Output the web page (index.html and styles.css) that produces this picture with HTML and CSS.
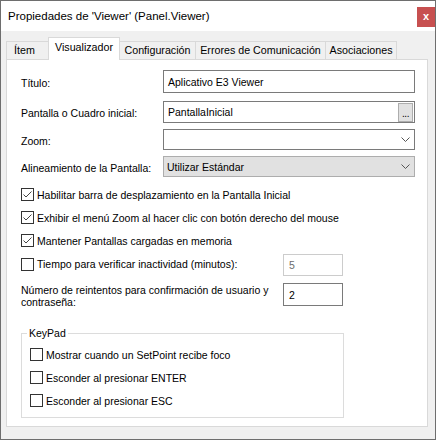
FILE: index.html
```html
<!DOCTYPE html>
<html lang="es">
<head>
<meta charset="utf-8">
<title>Propiedades de 'Viewer'</title>
<link rel="stylesheet" href="styles.css">
</head>
<body>
<div class="window">
  <div class="titlebar">
    <span class="title">Propiedades de 'Viewer' (Panel.Viewer)</span>
    <span class="close">x</span>
  </div>
  <div class="body">
    <div class="tabs">
      <div class="tab tab-item">Ítem</div>
      <div class="tab tab-viz active">Visualizador</div>
      <div class="tab tab-config">Configuración</div>
      <div class="tab tab-errors">Errores de Comunicación</div>
      <div class="tab tab-assoc">Asociaciones</div>
    </div>
    <div class="panel">
      <div class="field field-title">
        <span class="label">Título:</span>
        <div class="input">Aplicativo E3 Viewer</div>
      </div>
      <div class="field field-screen">
        <span class="label">Pantalla o Cuadro inicial:</span>
        <div class="input input-browse">PantallaInicial<span class="browse">...</span></div>
      </div>
      <div class="field field-zoom">
        <span class="label">Zoom:</span>
        <div class="combo"><span class="combo-text"></span><svg class="chevron" width="9" height="5" viewBox="0 0 9 5"><polyline points="0.5,0.5 4.5,4.5 8.5,0.5" fill="none" stroke="#555" stroke-width="1"/></svg></div>
      </div>
      <div class="field field-align">
        <span class="label">Alineamiento de la Pantalla:</span>
        <div class="combo combo-button"><span class="combo-text">Utilizar Estándar</span><svg class="chevron" width="9" height="5" viewBox="0 0 9 5"><polyline points="0.5,0.5 4.5,4.5 8.5,0.5" fill="none" stroke="#555" stroke-width="1"/></svg></div>
      </div>

      <div class="checks">
        <div class="check">
          <span class="box"><svg width="11" height="11" viewBox="0 0 11 11"><polyline points="1.5,5.5 4,8 9.5,2.5" fill="none" stroke="#444" stroke-width="1"/></svg></span>
          <span>Habilitar barra de desplazamiento en la Pantalla Inicial</span>
        </div>
        <div class="check">
          <span class="box"><svg width="11" height="11" viewBox="0 0 11 11"><polyline points="1.5,5.5 4,8 9.5,2.5" fill="none" stroke="#444" stroke-width="1"/></svg></span>
          <span>Exhibir el menú Zoom al hacer clic con botón derecho del mouse</span>
        </div>
        <div class="check">
          <span class="box"><svg width="11" height="11" viewBox="0 0 11 11"><polyline points="1.5,5.5 4,8 9.5,2.5" fill="none" stroke="#444" stroke-width="1"/></svg></span>
          <span>Mantener Pantallas cargadas en memoria</span>
        </div>
        <div class="check check-timer">
          <span class="timer-label"><span class="box"></span><span>Tiempo para verificar inactividad (minutos):</span></span>
          <div class="small-input disabled">5</div>
        </div>
      </div>

      <div class="retry">
        <span class="retry-label">Número de reintentos para confirmación de usuario y<br>contraseña:</span>
        <div class="small-input">2</div>
      </div>

      <fieldset class="group">
        <legend>KeyPad</legend>
        <div class="check">
          <span class="box"></span>
          <span>Mostrar cuando un SetPoint recibe foco</span>
        </div>
        <div class="check">
          <span class="box"></span>
          <span>Esconder al presionar ENTER</span>
        </div>
        <div class="check">
          <span class="box"></span>
          <span>Esconder al presionar ESC</span>
        </div>
      </fieldset>
    </div>
  </div>
</div>
</body>
</html>
```
FILE: styles.css
```css
* {
  box-sizing: border-box;
}

body {
  margin: 0;
  font-family: "Liberation Sans", Arial, sans-serif;
  font-size: 10.5px;
  color: #000;
  background: #fff;
}

.window {
  width: 436px;
  height: 440px;
  border: 1px solid #6e6e6e;
  background: #f0f0f0;
  display: flex;
  flex-direction: column;
}

.titlebar {
  height: 30px;
  flex: none;
  background: #fff;
  display: flex;
  align-items: flex-start;
}

.title {
  font-size: 11.5px;
  line-height: 31px;
  padding-left: 7px;
  color: #000;
}

.close {
  margin-left: auto;
  margin-top: 6px;
  width: 18px;
  height: 20px;
  background: #c75050;
  color: #fff;
  font-weight: bold;
  font-size: 11px;
  line-height: 19px;
  text-align: center;
}

.body {
  flex: 1;
  display: flex;
  flex-direction: column;
  padding: 6px 7px 12px 5px;
}

.tabs {
  display: flex;
  align-items: flex-end;
  height: 22px;
  flex: none;
}

.tab {
  height: 18px;
  border: 1px solid #d9d9d9;
  border-bottom: none;
  margin-left: -1px;
  background: #f0f0f0;
  text-align: center;
  line-height: 16px;
  white-space: nowrap;
  font-size: 10.7px;
}

.tab:first-child {
  margin-left: 0;
}

.tab.active {
  height: 23px;
  background: #fff;
  margin-bottom: -1px;
  position: relative;
  z-index: 1;
  line-height: 18px;
}

.tab-item { width: 43px; text-align: left; padding-left: 7px; }
.tab-viz { width: 72px; }
.tab-config { width: 77px; }
.tab-errors { width: 131px; }
.tab-assoc { width: 72px; }

.panel {
  flex: 1;
  background: #fff;
  border: 1px solid #d9d9d9;
  padding: 10px 12px 0 14px;
}

.field {
  display: grid;
  grid-template-columns: 142px 252px;
  align-items: center;
}

.label {
  padding-top: 2px;
}

.field-screen { margin-top: 8px; }
.field-zoom { margin-top: 6px; }
.field-align { margin-top: 6px; }

.input {
  height: 23px;
  border: 1px solid #7a7a7a;
  background: #fff;
  padding-left: 4px;
  display: flex;
  align-items: center;
}

.input-browse {
  height: 22px;
  padding-right: 1px;
}

.browse {
  margin-left: auto;
  width: 15px;
  height: 19px;
  background: #e1e1e1;
  border: 1px solid #adadad;
  font-size: 10px;
  line-height: 20px;
  text-align: center;
  letter-spacing: -0.5px;
}

.combo {
  height: 21px;
  border: 1px solid #7a7a7a;
  background: #fff;
  padding-left: 3px;
  display: flex;
  align-items: center;
}

.combo-button {
  background: #e1e1e1;
  border-color: #adadad;
}

.chevron {
  margin-left: auto;
  margin-right: 4px;
  flex: none;
}

.checks {
  margin-top: 6px;
}

.check {
  display: flex;
  align-items: center;
  height: 23px;
  white-space: nowrap;
}

.box {
  width: 13px;
  height: 13px;
  border: 1px solid #333;
  background: #fff;
  margin-right: 3px;
  flex: none;
  display: flex;
}

.check-timer {
  height: 24px;
}

.timer-label {
  width: 262px;
  display: flex;
  align-items: center;
  flex: none;
}

.small-input {
  width: 60px;
  height: 23px;
  border: 1px solid #7a7a7a;
  background: #fff;
  padding-left: 5px;
  display: flex;
  align-items: center;
  flex: none;
}

.small-input.disabled {
  height: 22px;
  align-self: flex-end;
  border-color: #cccccc;
  color: #6d6d6d;
}

.retry {
  display: flex;
  margin-top: 7px;
}

.retry-label {
  width: 262px;
  line-height: 12px;
  padding-top: 1px;
  flex: none;
}

.group {
  margin: 19px 0 0 0;
  width: 323px;
  border: 1px solid #dcdcdc;
  padding: 4px 0 5px 8px;
  min-width: 0;
}

.group legend {
  padding: 0 2px;
  margin-left: -3px;
  line-height: 12px;
}
```
